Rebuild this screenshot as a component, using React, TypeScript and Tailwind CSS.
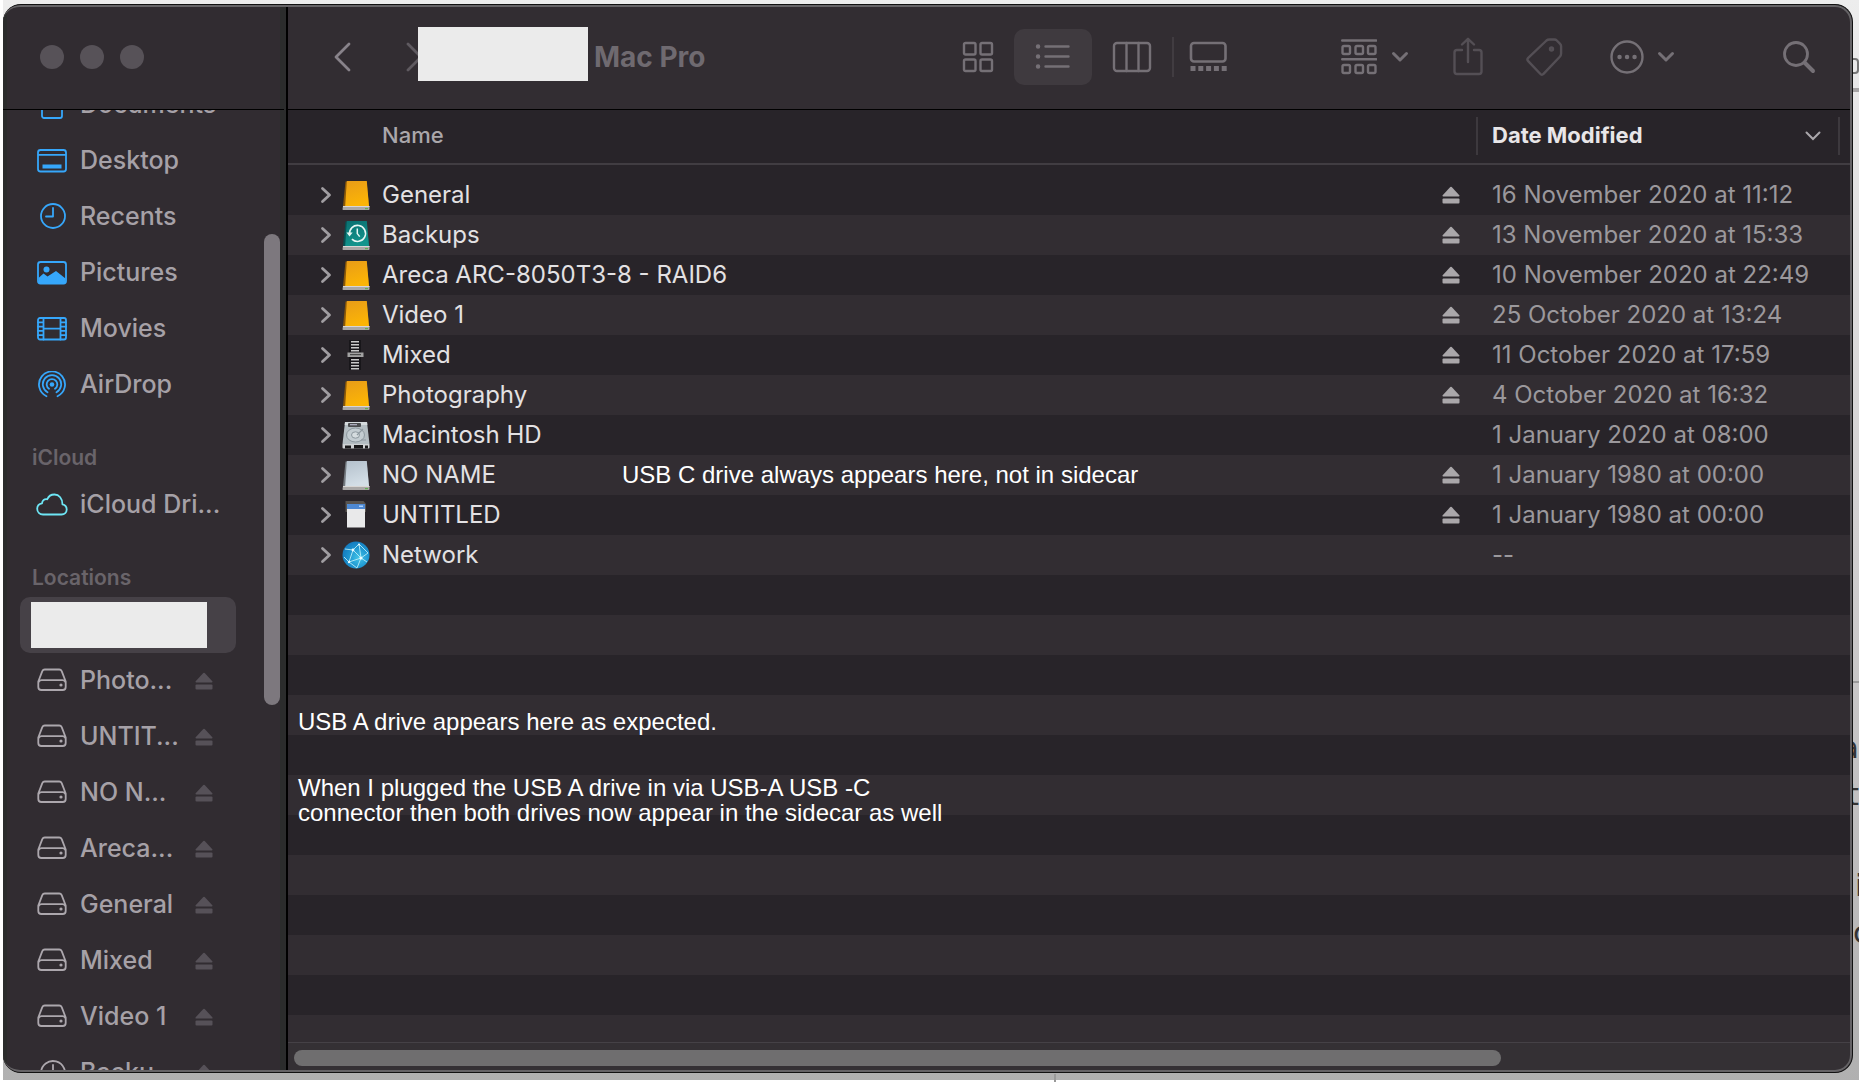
import React from "react";

type Kind = "drive" | "backup" | "mixer" | "hd" | "plain" | "card" | "network";

const ROWS: { name: string; kind: Kind; date: string; eject: boolean; note?: string }[] = [
  { name: "General", kind: "drive", date: "16 November 2020 at 11:12", eject: true },
  { name: "Backups", kind: "backup", date: "13 November 2020 at 15:33", eject: true },
  { name: "Areca ARC-8050T3-8 - RAID6", kind: "drive", date: "10 November 2020 at 22:49", eject: true },
  { name: "Video 1", kind: "drive", date: "25 October 2020 at 13:24", eject: true },
  { name: "Mixed", kind: "mixer", date: "11 October 2020 at 17:59", eject: true },
  { name: "Photography", kind: "drive", date: "4 October 2020 at 16:32", eject: true },
  { name: "Macintosh HD", kind: "hd", date: "1 January 2020 at 08:00", eject: false },
  {
    name: "NO NAME",
    kind: "plain",
    date: "1 January 1980 at 00:00",
    eject: true,
    note: "USB C drive always appears here, not in sidecar",
  },
  { name: "UNTITLED", kind: "card", date: "1 January 1980 at 00:00", eject: true },
  { name: "Network", kind: "network", date: "--", eject: false },
];

function Eject({ className }: { className: string }) {
  return (
    <svg className={className} width="18" height="18" viewBox="0 0 18 18" fill="currentColor" aria-hidden="true">
      <path d="M8.3 1.1a1 1 0 0 1 1.4 0l7.6 8.2c.5.6.2 1.2-.5 1.2H1.200c-.7 0-1-.6-.5-1.200z" />
      <rect x="0.500" y="12.500" width="17" height="5" rx="1" />
    </svg>
  );
}

function BookDrive({ id, from, to, side }: { id: string; from: string; to: string; side: string }) {
  return (
    <>
      <defs>
        <linearGradient id={id} x1="0" y1="0" x2="0.300" y2="1">
          <stop offset="0" stopColor={from} />
          <stop offset="1" stopColor={to} />
        </linearGradient>
      </defs>
      <path d="M3.500 1.500h21L27 26H1z" fill={side} />
      <path d="M4.800 1h20L27 26H3.200z" fill={`url(#${id})`} />
      <path d="M1 26h26.500v3.200a.8.8 0 0 1-.8.8H1.300a.8.8 0 0 1-.8-.8z" fill="#a9a7a6" />
      <path d="M1 26h26.500v1H1z" fill="#d8d6d4" />
      <rect x="23" y="28" width="3" height="1.200" fill="#5fae52" />
    </>
  );
}

function FileIcon({ kind, id }: { kind: Kind; id: string }) {
  return (
    <svg width="28" height="30" viewBox="0 0 28 30" className="shrink-0" aria-hidden="true">
      {kind === "drive" && <BookDrive id={id} from="#e89c18" to="#fbb406" side="#8a5808" />}
      {kind === "plain" && <BookDrive id={id} from="#b4c0cc" to="#d3dee6" side="#73797f" />}
      {kind === "backup" && (
        <>
          <BookDrive id={id} from="#0a6f70" to="#12948c" side="#075052" />
          <path d="M7.600 14.500a8 8 0 1 1 2.300 4.600" fill="none" stroke="#e6f6f3" strokeWidth="1.600" />
          <path d="M4.500 12.600h6.200l-3.200 3.800z" fill="#e6f6f3" />
          <path d="M15.300 8.600v5l2.400 3" fill="none" stroke="#e6f6f3" strokeWidth="1.500" />
        </>
      )}
      {kind === "mixer" && (
        <>
          <rect x="7" y="0" width="12" height="30" fill="#18161a" />
          {[1, 4, 7, 10, 19, 22, 25, 28].map((y) => (
            <rect key={y} x="9" y={y} width="8" height="1.500" fill="#c9c9c9" />
          ))}
          <rect x="5.500" y="12.500" width="16" height="4.500" fill="#a2a2a2" />
          <rect x="8" y="14" width="11" height="1.200" fill="#4c4c4c" />
        </>
      )}
      {kind === "hd" && (
        <>
          <path d="M3 2h22l2.500 22H.5z" fill="#b4bdc2" />
          <path d="M3 2h22l.4 3H2.700z" fill="#d5dadd" />
          <rect x="6" y="3" width="13" height="4" rx="1" fill="#4b4d50" />
          <rect x="8" y="4" width="7" height="1.300" fill="#aab" />
          <ellipse cx="13.500" cy="15" rx="9" ry="7" fill="#c3ccd1" stroke="#8d989f" strokeWidth="1" />
          <ellipse cx="13.500" cy="15" rx="4" ry="3.200" fill="#d5dcdf" stroke="#8d989f" strokeWidth="1" />
          <path d="M21 9l-6 6M19 20h5" stroke="#8d989f" strokeWidth="1.200" />
          <path d="M.5 24h27v3.500a1 1 0 0 1-1 1h-25a1 1 0 0 1-1-1z" fill="#cfd2d4" />
          <path d="M3 25.500h6v3H3zM12 25h9v3.500h-9zM23 25.500h3v3h-3z" fill="#19181a" />
        </>
      )}
      {kind === "card" && (
        <>
          <path d="M3.500 1h18l2.500 3v8H3.500z" fill="#57534f" />
          <path d="M5 9h18v18.500H5z" fill="#e9e9ea" />
          <path d="M5 4h18v5H5z" fill="#4d88d2" />
          <rect x="17" y="5.500" width="4" height="1.500" fill="#a9d0ff" />
        </>
      )}
      {kind === "network" && (
        <>
          <defs>
            <radialGradient id={id} cx="0.600" cy="0.600" r="0.650">
              <stop offset="0" stopColor="#43c4e8" />
              <stop offset="0.600" stopColor="#1c93cf" />
              <stop offset="1" stopColor="#1479bd" />
            </radialGradient>
          </defs>
          <circle cx="14" cy="15" r="13.500" fill={`url(#${id})`} />
          <g fill="none" stroke="#b8ecf7" strokeWidth="0.900">
            <path d="M3 9l8 1 6-6M11 10l8 8 7-5M11 10L7 22l12-4M19 18l-4 10M17 4l2 14M2 17l5 5 8 6M17 4l9 9M19 18l6 4" />
          </g>
          <g fill="#e8fbff">
            <circle cx="11" cy="10" r="1.400" />
            <circle cx="19" cy="18" r="1.600" />
            <circle cx="7" cy="22" r="1.200" />
            <circle cx="17" cy="4.500" r="1.100" />
          </g>
        </>
      )}
    </svg>
  );
}

function Glyph({ children, color }: { children: React.ReactNode; color: string }) {
  return (
    <svg
      width="32"
      height="28"
      viewBox="0 0 32 28"
      fill="none"
      stroke="currentColor"
      strokeWidth="1.800"
      strokeLinecap="round"
      strokeLinejoin="round"
      className={`shrink-0 ${color}`}
      aria-hidden="true"
    >
      {children}
    </svg>
  );
}

const BLUE = "text-[#36a7fb]";

const FAVOURITES: { label: string; icon: React.ReactNode }[] = [
  {
    label: "Documents",
    icon: <path d="M8 1h10l8 8v16a2 2 0 0 1-2 2H8a2 2 0 0 1-2-2V3a2 2 0 0 1 2-2z" />,
  },
  {
    label: "Desktop",
    icon: (
      <>
        <rect x="2" y="3" width="28" height="21.500" rx="2.500" />
        <path d="M2.500 7.800h27" />
        <rect x="6.500" y="17.500" width="19" height="4" fill="currentColor" stroke="none" />
      </>
    ),
  },
  {
    label: "Recents",
    icon: (
      <>
        <circle cx="17" cy="13" r="12" />
        <path d="M17 5v8.500h-7" />
      </>
    ),
  },
  {
    label: "Pictures",
    icon: (
      <>
        <rect x="2" y="3" width="28" height="21.500" rx="2.500" />
        <circle cx="10.500" cy="10.500" r="3" fill="currentColor" stroke="none" />
        <path d="M2.500 19l5-4.500 4 3L20 12l9.500 7.500V24H3z" fill="currentColor" stroke="none" />
      </>
    ),
  },
  {
    label: "Movies",
    icon: (
      <>
        <rect x="2" y="3" width="28" height="21.500" rx="2" />
        <path d="M7.500 3v21.500M24.500 3v21.500M7.500 13.700h17M2 7.300h5.500M2 11.600h5.500M2 15.900h5.500M2 20.200h5.500M24.500 7.300H30M24.500 11.600H30M24.500 15.900H30M24.500 20.200H30" />
      </>
    ),
  },
  {
    label: "AirDrop",
    icon: (
      <>
        <circle cx="16" cy="13.500" r="2.300" fill="currentColor" stroke="none" />
        <path d="M10.500 25.200a13 13 0 1 1 11 0M11.500 21.300a9.200 9.200 0 1 1 9 0M13 17.800a5.300 5.300 0 1 1 6 0" />
      </>
    ),
  },
];

const LOCATIONS = ["Photo...", "UNTIT...", "NO N...", "Areca...", "General", "Mixed", "Video 1"];

function NavItem({ label, children, eject }: { label: string; children: React.ReactNode; eject?: boolean }) {
  return (
    <li>
      <button className="flex h-14 w-full items-center pr-[23px] pl-4 text-left">
        {children}
        <span className="ml-3 flex-1 whitespace-nowrap">{label}</span>
        {eject && <Eject className="shrink-0 text-[#565158]" />}
      </button>
    </li>
  );
}

function DriveGlyph() {
  return (
    <Glyph color="text-[#aca7ad]">
      <path d="M8.700 2.500h14.600c1.200 0 1.900.6 2.400 1.700l4 10.300v5.500c0 2-1 3-3 3H5.300c-2 0-3-1-3-3v-5.500l4-10.300c.5-1.100 1.200-1.700 2.400-1.700zM3 14.500c.5-1 1.500-1.300 2.500-1.300h21c1 0 2 .3 2.500 1.300" />
      <circle cx="25" cy="18" r="1.600" fill="currentColor" stroke="none" />
    </Glyph>
  );
}

function Sidebar() {
  return (
    <aside className="flex w-[283px] shrink-0 flex-col border-r-[6px] border-l-4 border-[#2b2c2c] bg-[#312c31]">
      <div className="flex h-[102px] shrink-0 items-start gap-4 pt-[38px] pl-[33px]">
        {["Close", "Minimise", "Zoom"].map((n) => (
          <button key={n} aria-label={n} className="size-6 rounded-full bg-[#575258]" />
        ))}
      </div>
      <div className="-mx-1 h-px shrink-0 bg-black" />
      <div className="flex min-h-0 flex-1 overflow-hidden">
        <nav className="-mt-[33px] ml-[13px] w-[216px] text-[25px] font-medium text-[#a6a1a7]">
          <ul>
            {FAVOURITES.map((f) => (
              <NavItem key={f.label} label={f.label}>
                <Glyph color={BLUE}>{f.icon}</Glyph>
              </NavItem>
            ))}
          </ul>
          <h2 className="flex h-16 items-end pb-1 pl-3 text-[21px] font-semibold text-[#69646a]">iCloud</h2>
          <ul>
            <NavItem label="iCloud Dri...">
              <Glyph color="text-[#6ee6f5]">
                <path d="M7 23.500h18.500c3 0 5.200-2 5.200-5 0-2.800-1.800-4.700-4.300-5.200C26.500 7.500 23 3.500 18.500 3.500c-3.300 0-6 1.700-7.200 4.800-3-.6-5 1-5.300 4C3 12.800 1.200 15 1.200 17.800c0 3.200 2.400 5.700 5.800 5.700z" />
              </Glyph>
            </NavItem>
          </ul>
          <h2 className="flex h-16 items-end pb-1 pl-3 text-[21px] font-semibold text-[#69646a]">Locations</h2>
          <ul>
            <li>
              <button aria-label="This Mac" className="flex h-14 w-full items-center rounded-[10px] bg-[#464147] pl-[11px]">
                <span className="h-[46px] w-[176px] bg-[#ebebeb]" />
              </button>
            </li>
            {LOCATIONS.map((l) => (
              <NavItem key={l} label={l} eject>
                <DriveGlyph />
              </NavItem>
            ))}
            <NavItem label="Backu..." eject>
              <Glyph color="text-[#aca7ad]">
                <path d="M5 14a12 12 0 1 1 3.500 8.500M17 6v8.500l5 4" />
                <path d="M1.500 13h7L5 17z" fill="currentColor" stroke="none" />
              </Glyph>
            </NavItem>
          </ul>
        </nav>
        <div className="mt-[124px] ml-auto h-[49%] w-4 rounded-full bg-[#7d787e]" />
      </div>
    </aside>
  );
}

function SmallChevron() {
  return (
    <svg width="18" height="12" viewBox="0 0 18 12" fill="none" stroke="currentColor" strokeWidth="3" strokeLinecap="round" strokeLinejoin="round" aria-hidden="true">
      <path d="M2.500 2.500L9 9l6.500-6.500" />
    </svg>
  );
}

const TOOL = { fill: "none", stroke: "currentColor", strokeLinecap: "round", strokeLinejoin: "round" } as const;

function Toolbar() {
  return (
    <header className="flex h-[102px] shrink-0 items-center bg-[#322d32] pr-[36px] pb-0.5 text-[#757076]">
      <button aria-label="Back" className="ml-[45px] text-[#88838a]">
        <svg width="18" height="30" viewBox="0 0 18 30" {...TOOL} strokeWidth="2.800">
          <path d="M16 2L3 15l13 13" />
        </svg>
      </button>
      <button aria-label="Forward" className="ml-[54px] w-[13px] overflow-hidden text-[#5f5a60]">
        <svg width="18" height="30" viewBox="0 0 18 30" {...TOOL} strokeWidth="2.800">
          <path d="M3 2l13 13L3 28" />
        </svg>
      </button>
      <span className="mb-1.5 h-[54px] w-[170px] shrink-0 bg-[#ebebeb]" />
      <h1 className="ml-1.5 flex-1 text-[28px] font-bold whitespace-nowrap text-[#6f6a70]">Mac Pro</h1>

      <button aria-label="Icon view">
        <svg width="32" height="32" viewBox="0 0 32 32" {...TOOL} strokeWidth="2.400">
          <rect x="2" y="2" width="11.500" height="11.500" rx="1.500" />
          <rect x="18.500" y="2" width="11.500" height="11.500" rx="1.500" />
          <rect x="2" y="18.500" width="11.500" height="11.500" rx="1.500" />
          <rect x="18.500" y="18.500" width="11.500" height="11.500" rx="1.500" />
        </svg>
      </button>
      <button aria-label="List view" className="ml-5 flex h-14 w-[78px] items-center justify-center rounded-[10px] bg-[#3f3a3f]">
        <svg width="36" height="28" viewBox="0 0 36 28" {...TOOL} strokeWidth="2.400">
          <path d="M10.500 3.500h23M10.500 13.500h23M10.500 23.500h23" />
          <path d="M3 3.500h.1M3 13.500h.1M3 23.500h.1" strokeWidth="4.400" />
        </svg>
      </button>
      <button aria-label="Column view" className="ml-5">
        <svg width="40" height="32" viewBox="0 0 40 32" {...TOOL} strokeWidth="2.400">
          <rect x="2" y="2" width="36" height="28" rx="3" />
          <path d="M14.500 2v28M26.500 2v28" />
        </svg>
      </button>
      <span className="ml-5 h-10 w-0.5 bg-[#413c41]" />
      <button aria-label="Gallery view" className="ml-[14px]">
        <svg width="40" height="32" viewBox="0 0 40 32" {...TOOL} strokeWidth="2.600">
          <rect x="3" y="2" width="34.500" height="18.500" rx="3" />
          <path d="M2.500 27.500h37" strokeWidth="5" strokeDasharray="5 2.800" strokeLinecap="butt" />
        </svg>
      </button>
      <button aria-label="Group by" className="ml-[113px] flex items-center gap-3.5">
        <svg width="36" height="38" viewBox="0 0 36 38" {...TOOL} strokeWidth="2.400">
          <path d="M1.200 2.500h34M1.200 21.200h34" />
          <rect x="1.500" y="8" width="7.500" height="8" rx="1.500" />
          <rect x="14.500" y="8" width="7.500" height="8" rx="1.500" />
          <rect x="27" y="8" width="7.500" height="8" rx="1.500" />
          <rect x="1.500" y="27" width="7.500" height="8" rx="1.500" />
          <rect x="14.500" y="27" width="7.500" height="8" rx="1.500" />
          <rect x="27" y="27" width="7.500" height="8" rx="1.500" />
        </svg>
        <SmallChevron />
      </button>
      <button aria-label="Share" className="ml-[43px] text-[#544f55]">
        <svg width="32" height="40" viewBox="0 0 32 40" {...TOOL} strokeWidth="2.400">
          <path d="M10 13H5a2.500 2.500 0 0 0-2.500 2.500v19A2.500 2.500 0 0 0 5 37h22a2.500 2.500 0 0 0 2.500-2.500v-19A2.500 2.500 0 0 0 27 13h-5M16 25V2M10 7.500L16 1.800l6 5.700" />
        </svg>
      </button>
      <button aria-label="Edit tags" className="ml-[41px] text-[#544f55]">
        <svg width="38" height="40" viewBox="0 0 38 40" {...TOOL} strokeWidth="2.400">
          <path d="M21.500 3.500 3.200 20.800c-1.100 1.100-1.100 2.100 0 3.300l12 12.700c1.100 1.200 2.200 1.200 3.300.1L34.600 20c1-1 1.500-2 1.500-3.500V9.200c0-1-.3-1.700-1-2.400l-3.300-3.300c-.7-.7-1.400-1-2.400-1h-5c-1.200 0-2 .2-2.900 1z" />
          <circle cx="26.500" cy="12" r="1.500" />
        </svg>
      </button>
      <button aria-label="More actions" className="ml-[46px] flex items-center gap-3">
        <svg width="36" height="36" viewBox="0 0 36 36" {...TOOL} strokeWidth="2.400">
          <circle cx="18" cy="18" r="15.500" />
          <path d="M10.500 18h.1M18 18h.1M25.500 18h.1" strokeWidth="4.400" />
        </svg>
        <SmallChevron />
      </button>
      <button aria-label="Search" className="ml-[107px]">
        <svg width="34" height="34" viewBox="0 0 34 34" {...TOOL} strokeWidth="2.800">
          <circle cx="14" cy="14" r="11.500" />
          <path d="M22.500 22.500l8.500 8.500" strokeWidth="4" />
        </svg>
      </button>
    </header>
  );
}

function FileTable() {
  return (
    <table className="w-full table-fixed border-collapse text-left text-2xl">
      <colgroup>
        <col />
        <col className="w-[376px]" />
      </colgroup>
      <thead className="text-[22px]">
        <tr className="h-[54px] border-b-2 border-[#413d42]">
          <th className="p-0 pb-0.5 pl-[94px] font-medium text-[#aaa7ab]">Name</th>
          <th className="p-0 pb-0.5" aria-sort="descending">
            <span className="flex items-center text-[#e8e6e8]">
              <span className="h-[38px] w-0.5 bg-[#3d393e]" />
              <span className="ml-3.5 flex-1 font-bold">Date Modified</span>
              <svg width="16" height="10" viewBox="0 0 16 10" fill="none" stroke="#aaa7ab" strokeWidth="2" strokeLinecap="round" aria-hidden="true">
                <path d="M1.500 1.500L8 8l6.500-6.500" />
              </svg>
              <span className="mr-3 ml-[17px] h-[38px] w-0.5 bg-[#3d393e]" />
            </span>
          </th>
        </tr>
      </thead>
      <tbody className="before:block before:h-[10px] before:content-['']">
        {ROWS.map((r, i) => (
          <tr key={r.name} className="h-10 even:bg-[#322d32]">
            <td className="p-0">
              <div className="flex h-10 items-center pr-4 pl-8">
                <button aria-label={`Expand ${r.name}`} className="text-[#a09da1]">
                  <svg width="12" height="18" viewBox="0 0 12 18" fill="none" stroke="currentColor" strokeWidth="2.800" strokeLinecap="round" strokeLinejoin="round">
                    <path d="M2.500 2.500L9.500 9l-7 6.500" />
                  </svg>
                </button>
                <span className="mr-3 ml-2.5">
                  <FileIcon kind={r.kind} id={`fill-${i}`} />
                </span>
                <span className="min-w-[240px] whitespace-nowrap text-[#e3e1e3]">{r.name}</span>
                {r.note && (
                  <span className="font-['Liberation_Sans',Arial,sans-serif] whitespace-nowrap text-white">{r.note}</span>
                )}
                {r.eject && (
                  <button aria-label={`Eject ${r.name}`} className="ml-auto">
                    <Eject className="text-[#aaa7aa]" />
                  </button>
                )}
              </div>
            </td>
            <td className="p-0 pl-4 whitespace-nowrap text-[#9b989c]">{r.date}</td>
          </tr>
        ))}
      </tbody>
    </table>
  );
}

export default function App() {
  return (
    <div className="relative flex h-screen overflow-hidden bg-gradient-to-b from-[#ededed] via-[#d0cecf] to-[#b0b0b0] pt-1 pr-2 pb-[9px] font-[Inter,'Noto_Sans',sans-serif]">
      <div className="absolute inset-y-0 left-0 w-[3px] bg-white" />
      <div className="absolute inset-y-0 right-0 w-0.5 bg-white" />
      <div className="absolute inset-x-0 bottom-0 h-0.5 bg-white" />
      <div className="absolute bottom-0 left-[1054px] h-2 w-0.5 bg-[#999]" />
      <div aria-hidden="true" className="absolute top-0 right-0.5 h-full w-3 overflow-hidden font-['DejaVu_Sans',sans-serif] text-[30px] leading-9 text-[#333]">
        <div className="absolute top-[58px] left-0 h-4 w-3 rounded border-2 border-[#777]" />
        <div className="absolute top-[88px] left-0 h-1 w-3 bg-[#a5a3a4]" />
        <div className="absolute top-[681px] left-0 h-0.5 w-3 bg-[#999]" />
        <span className="absolute top-[730px] right-0">a</span>
        <span className="absolute top-[777px] right-0">t</span>
        <span className="absolute top-[868px] left-2">i</span>
        <span className="absolute top-[915px] left-1.5">c</span>
      </div>

      <main className="relative ml-[3px] flex min-w-0 flex-1 overflow-hidden rounded-[18px] border-y border-r border-[#111] bg-[#282429]">
        <div className="pointer-events-none absolute inset-0 z-10 rounded-[17px] border-y-2 border-r-2 border-[#656366]" />
        <div className="flex min-w-0 flex-1 pt-0.5">
          <Sidebar />
          <div className="w-0.5 shrink-0 bg-black" />
          <section className="relative flex min-w-0 flex-1 flex-col">
            <Toolbar />
            <div className="h-px shrink-0 bg-black" />
            <FileTable />
            <div className="relative min-h-0 flex-1 bg-[repeating-linear-gradient(to_bottom,#282429_0_40px,#322d32_40px_80px)] font-['Liberation_Sans',Arial,sans-serif] text-2xl leading-[25px] text-white">
              <p className="absolute top-[134px] left-[10px]">USB A drive appears here as expected.</p>
              <p className="absolute top-[200px] left-[10px]">
                When I plugged the USB A drive in via USB-A USB -C
                <br />
                connector then both drives now appear in the sidecar as well
              </p>
            </div>
            <div className="h-[30px] shrink-0 border-t border-[#454146] bg-[#343034] pt-[7px] pl-1.5">
              <div className="h-4 w-[77.5%] rounded-full bg-[#6f6e6f]" />
            </div>
          </section>
        </div>
      </main>
    </div>
  );
}
